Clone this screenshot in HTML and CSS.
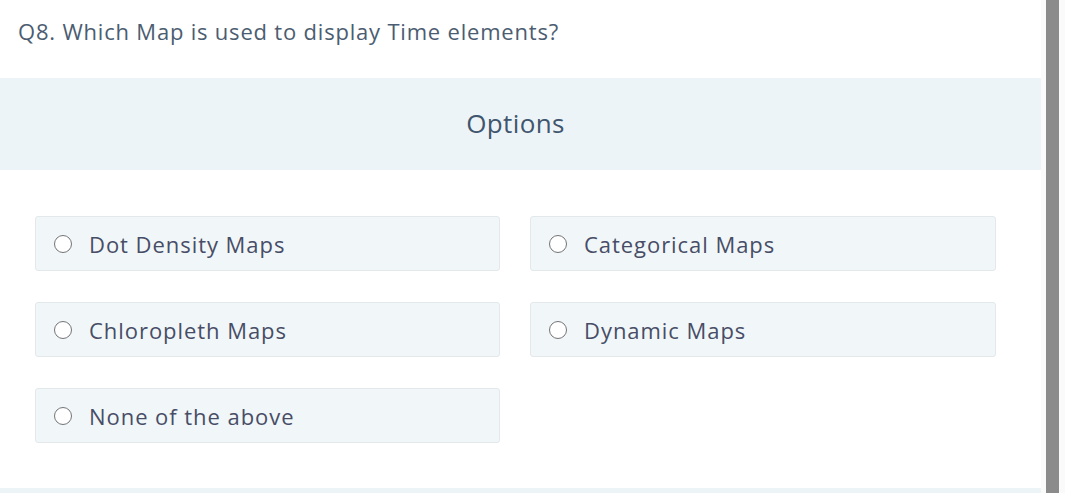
FILE: index.html
```html
<!DOCTYPE html>
<html lang="en">
<head>
<meta charset="utf-8">
<title>Q8</title>
<link rel="stylesheet" href="styles.css">
</head>
<body>
<div class="page">
  <main class="main">
    <h2 class="question">Q8. Which Map is used to display Time elements?</h2>
    <div class="band"><span class="band-title">Options</span></div>
    <div class="options">
      <label class="option"><span class="radio"></span><span class="label">Dot Density Maps</span></label>
      <label class="option"><span class="radio"></span><span class="label">Categorical Maps</span></label>
      <label class="option"><span class="radio"></span><span class="label">Chloropleth Maps</span></label>
      <label class="option"><span class="radio"></span><span class="label">Dynamic Maps</span></label>
      <label class="option"><span class="radio"></span><span class="label">None of the above</span></label>
    </div>
    <div class="footer-band"></div>
  </main>
  <div class="rail"><div class="bar"></div></div>
</div>
</body>
</html>
```

FILE: styles.css
```css
* { box-sizing: border-box; }
html, body { margin: 0; padding: 0; height: 100%; background: #ffffff; overflow: hidden; }
body { font-family: "Open Sans", Lato, sans-serif; }
.page { display: flex; height: 493px; }
.main { flex: 0 0 1041px; display: flex; flex-direction: column; background: #ffffff; }
.main > * { flex-shrink: 0; }
.question {
  margin: 0;
  height: 78px;
  padding: 16px 0 0 18px;
  font-size: 22px;
  font-weight: 400;
  color: #4b5d71;
  letter-spacing: 0.8px;
  line-height: 30px;
}
.band {
  height: 92px;
  background: #edf4f7;
  display: flex;
  align-items: center;
  justify-content: center;
}
.band-title {
  font-size: 26px;
  color: #3f566e;
  letter-spacing: 0.4px;
  padding: 0 10px 2px 0;
  line-height: 32px;
}
.options {
  display: grid;
  grid-template-columns: 465px 466px;
  column-gap: 30px;
  row-gap: 31px;
  padding: 46px 0 0 35px;
}
.option {
  height: 55px;
  background: #f1f7f8;
  border: 1px solid #e3e9eb;
  border-radius: 3px;
  display: flex;
  align-items: center;
  padding-left: 18px;
  gap: 17px;
}
.radio {
  width: 18px;
  height: 18px;
  border: 1.5px solid #747478;
  border-radius: 50%;
  background: #ffffff;
  flex: 0 0 auto;
}
.label {
  font-size: 22px;
  color: #484d67;
  letter-spacing: 0.95px;
  line-height: 28px;
}
.footer-band {
  margin-top: 45px;
  height: 10px;
  background: #edf4f7;
}
.rail {
  flex: 1 1 auto;
  display: flex;
  padding-left: 5px;
  background: #fafafa;
}
.bar { width: 13px; height: 100%; background: #8b8b8b; }
```
